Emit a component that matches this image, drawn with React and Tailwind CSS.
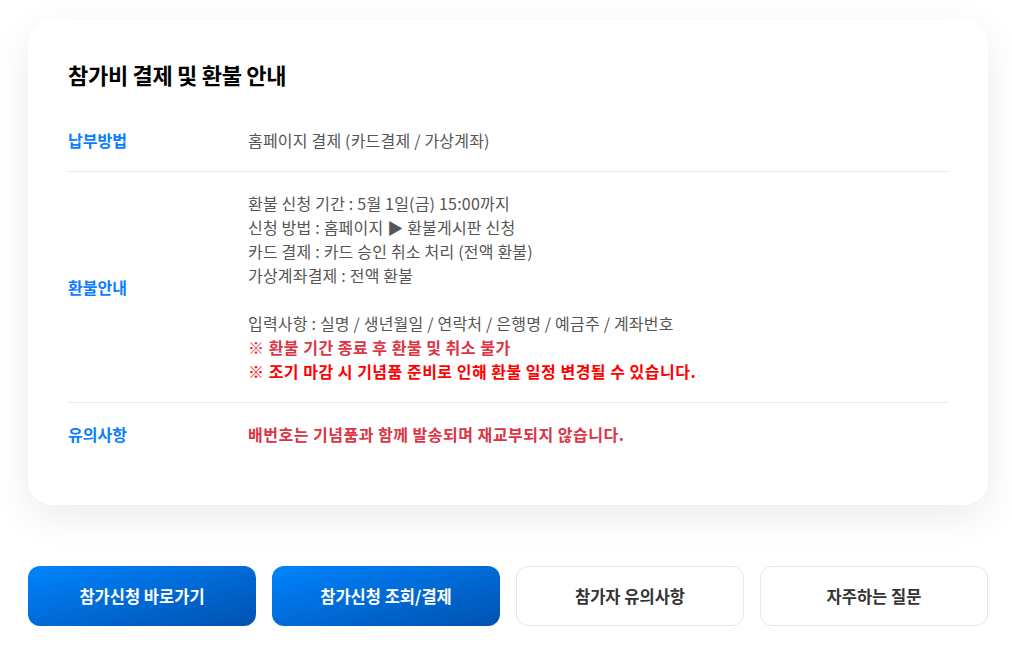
import React from "react";

const FONT = "font-['Noto_Sans_CJK_KR','Noto_Sans',sans-serif]";

const Row = ({ label, children, last }) => (
  <div className={`flex items-center py-[19px] ${last ? "" : "border-b border-[#ebebeb]"}`}>
    <div className="w-[180px] shrink-0 text-[16px] font-bold leading-6 text-[#0a7cff]">{label}</div>
    <div className="flex-1 text-[16px] leading-6 tracking-[0.2px] text-[#555]">{children}</div>
  </div>
);

const buttons = [
  { label: "참가신청 바로가기", primary: true },
  { label: "참가신청 조회/결제", primary: true },
  { label: "참가자 유의사항", primary: false },
  { label: "자주하는 질문", primary: false },
];

export default function App() {
  return (
    <div className={`w-full bg-white pt-[20px] ${FONT}`}>
      <div className="ml-[28px] w-[960px]">
        <div className="rounded-[24px] bg-white p-10 shadow-[0_12px_40px_rgba(0,0,0,0.08)]">
          <h2 className="mb-[21px] text-[22px] font-bold leading-7 tracking-[-0.3px] text-black">
            참가비 결제 및 환불 안내
          </h2>
          <Row label="납부방법">홈페이지 결제 (카드결제 / 가상계좌)</Row>
          <Row label="환불안내">
            <p>환불 신청 기간 : 5월 1일(금) 15:00까지</p>
            <p>신청 방법 : 홈페이지 ▶ 환불게시판 신청</p>
            <p>카드 결제 : 카드 승인 취소 처리 (전액 환불)</p>
            <p>가상계좌결제 : 전액 환불</p>
            <p className="h-6" />
            <p>입력사항 : 실명 / 생년월일 / 연락처 / 은행명 / 예금주 / 계좌번호</p>
            <p className="font-bold tracking-[0.5px] text-[#dc3545]">※ 환불 기간 종료 후 환불 및 취소 불가</p>
            <p className="font-bold tracking-[0.5px] text-[#ff0000]">※ 조기 마감 시 기념품 준비로 인해 환불 일정 변경될 수 있습니다.</p>
          </Row>
          <Row label="유의사항" last>
            <span className="font-bold tracking-[0.5px] text-[#dc3545]">배번호는 기념품과 함께 발송되며 재교부되지 않습니다.</span>
          </Row>
        </div>
        <div className="mt-[61px] grid grid-cols-4 gap-4 pb-[23px]">
          {buttons.map((b) => (
            <button
              key={b.label}
              className={
                b.primary
                  ? "h-[60px] rounded-xl bg-gradient-to-br from-[#0084ff] to-[#0052b0] text-[16.5px] font-bold text-white"
                  : "h-[60px] rounded-xl border border-[#e5e7eb] bg-white text-[16.5px] font-bold text-[#333]"
              }
            >
              {b.label}
            </button>
          ))}
        </div>
      </div>
    </div>
  );
}
